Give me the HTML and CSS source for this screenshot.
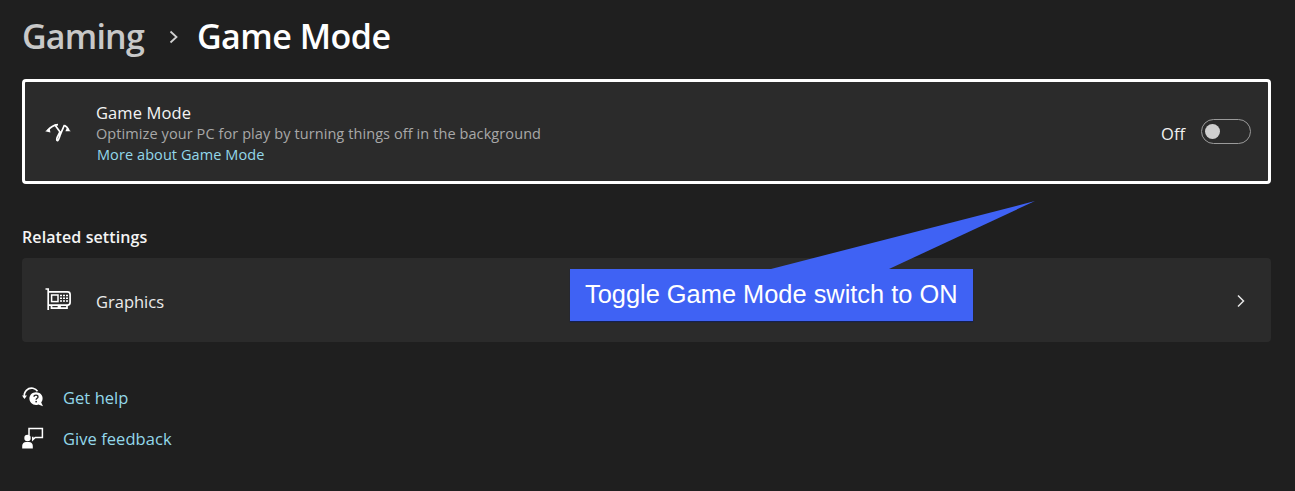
FILE: index.html
```html
<!DOCTYPE html>
<html lang="en">
<head>
<meta charset="utf-8">
<title>Game Mode</title>
<link rel="stylesheet" href="styles.css">
</head>
<body>
<main class="page">
  <header class="crumbs">
    <span class="crumb-parent">Gaming</span>
    <svg class="crumb-sep" viewBox="0 0 12 16"><path d="M2.5 2.5 8.5 8 2.5 13.5" fill="none" stroke="#d0d0d0" stroke-width="1.8"/></svg>
    <span class="crumb-current">Game Mode</span>
  </header>

  <section class="card card-focus">
    <svg class="row-icon" viewBox="0 0 26 22" fill="none" stroke="#fff" stroke-width="1.7">
      <path d="M2.5 9.6C5 6.4 8.5 4 13 3.6M19.4 4.4C21.2 5.2 22.8 7 23.8 9" />
      <path d="M0.2 10.3 4.6 7.2 5.4 11.6Z" fill="#fff" stroke="none"/>
      <path d="M25.8 10.3 21.8 7 20.4 10.2Z" fill="#fff" stroke="none"/>
      <path d="M9.8 3.8 15.2 11.2"/>
      <path d="M19.4 4 15 14.4C14.2 16.8 13.6 19.2 12.7 19.6 11.5 20 11.5 18 12.3 16.2L15.2 10.4"/>
    </svg>
    <div class="row-text">
      <div class="row-title">Game Mode</div>
      <div class="row-sub">Optimize your PC for play by turning things off in the background</div>
      <a class="row-link">More about Game Mode</a>
    </div>
    <span class="toggle-label">Off</span>
    <span class="toggle"><span class="knob"></span></span>
  </section>

  <h2 class="section-title">Related settings</h2>

  <section class="card card-plain">
    <svg class="row-icon" viewBox="0 0 26 24" fill="none" stroke="#fff" stroke-width="1.7">
      <path d="M0.5 2H3.2V23"/>
      <path d="M3.2 4.8H22.5C24.2 4.8 25.1 5.7 25.1 7.4V15.6C25.1 17.2 24.2 18.1 22.5 18.1H3.2"/>
      <path d="M6.5 18.1V21.2H13.5V18.1M15 18.1V21.2H22V18.1"/>
      <rect x="6.6" y="8" width="6.4" height="6.6" stroke-width="1.5"/>
      <path d="M15 8.6H23M15 11.3H23M15 14H23" stroke-dasharray="2 1" stroke-width="1.5"/>
    </svg>
    <div class="row-name">Graphics</div>
    <svg class="row-chevron" viewBox="0 0 12 16"><path d="M3 2.5 8.5 8 3 13.5" fill="none" stroke="#e6e6e6" stroke-width="1.5"/></svg>
  </section>

  <nav class="help">
    <a class="help-row">
      <svg class="help-icon" viewBox="0 0 22 22">
        <path d="M2.5 11.5C1.2 5.8 6 1.3 11 2.3 13 2.7 14.6 3.8 15.5 5.2" fill="none" stroke="#fff" stroke-width="1.6"/>
        <path d="M0 9.5 5 9.5 2.5 13Z" fill="#fff"/>
        <path d="M14 6.2C18 6.2 20.6 9 20.6 12.2 20.6 14 20 15.4 19.2 16.4L21 20.2 16.4 18.4C15.4 18.8 14.7 19 14 19 10.2 19 7.4 16 7.4 12.6 7.4 9 10.2 6.2 14 6.2Z" fill="#fff"/>
        <path d="M12 10.8C12 9.6 13 9.2 14 9.2 15.2 9.2 16 9.9 16 10.9 16 12.3 14.1 12.4 14.1 13.8" fill="none" stroke="#202020" stroke-width="1.3"/>
        <rect x="13.4" y="14.9" width="1.5" height="1.5" fill="#202020"/>
      </svg>
      <span>Get help</span>
    </a>
    <a class="help-row">
      <svg class="help-icon" viewBox="0 0 22 22">
        <circle cx="5.5" cy="11" r="3.2" fill="#fff"/>
        <path d="M0.2 21.5V18.8C0.2 16.4 2 15 4 15H7C9 15 10.8 16.4 10.8 18.8V21.5Z" fill="#fff"/>
        <path d="M7 8.5V1.5H20.4V10.5H13.2L10.8 12.7V10.5H10" fill="none" stroke="#fff" stroke-width="1.5"/>
      </svg>
      <span>Give feedback</span>
    </a>
  </nav>
</main>

<aside class="callout">
  <svg class="callout-tail" viewBox="0 0 270 70"><path d="M0 68 264 0 118 68Z" fill="#3f62f4"/></svg>
  <div class="callout-box">Toggle Game Mode switch to ON</div>
</aside>
</body>
</html>
```

FILE: styles.css
```css
* { box-sizing: border-box; }
html, body { margin: 0; padding: 0; }
body {
  width: 1295px;
  height: 491px;
  overflow: hidden;
  background: #1f1f1f;
  color: #fff;
  font-family: "Open Sans", "Noto Sans", "Liberation Sans", sans-serif;
  position: relative;
}
.page { padding: 14px 24px 0 22px; }
.crumbs {
  display: flex;
  align-items: center;
  height: 44px;
  font-size: 34px;
  font-weight: 600;
  letter-spacing: -0.5px;
}
.crumb-parent { color: #c8c8c8; letter-spacing: -0.8px; }
.crumb-sep { width: 12px; height: 16px; margin: 2px 17px 0 24px; }
.crumb-current { color: #fff; }
.card {
  display: flex;
  align-items: center;
  background: #2b2b2b;
  border-radius: 4px;
}
.card-focus {
  height: 105px;
  margin-top: 21px;
  border: 3px solid #fff;
  padding: 0 17px 0 20px;
}
.card-plain {
  height: 84px;
  padding: 0 24px 0 23px;
}
.row-icon { width: 26px; height: 22px; flex: none; }
.card-plain .row-icon { height: 24px; margin-top: -2px; }
.row-text { margin-left: 25px; flex: 1; margin-top: 2px; }
.row-title { font-size: 16.5px; line-height: 22px; letter-spacing: 0.1px; color: #f4f4f4; }
.row-sub { font-size: 14.5px; line-height: 19px; letter-spacing: 0.09px; color: #a8a8a8; }
.row-link {
  display: block;
  margin: 2px 0 0 1px;
  font-size: 14.5px;
  line-height: 19px;
  letter-spacing: 0.08px;
  color: #93d8ea;
}
.toggle-label { font-size: 16.5px; color: #f2f2f2; margin: 3px 16px 0 0; }
.toggle {
  width: 50px;
  height: 25px;
  border: 1px solid #9a9a9a;
  border-radius: 13px;
  display: flex;
  align-items: center;
  padding-left: 3px;
}
.knob { width: 15px; height: 15px; border-radius: 50%; background: #cfcfcf; }
.section-title {
  margin: 42px 0 0;
  height: 32px;
  font-size: 16px;
  line-height: 22px;
  font-weight: 600;
  letter-spacing: 0.1px;
  color: #f4f4f4;
}
.row-name { flex: 1; margin-left: 25px; font-size: 16.5px; color: #ececec; margin-top: 3px; }
.row-chevron { width: 12px; height: 16px; flex: none; margin-top: 1px; }
.help { display: flex; flex-direction: column; gap: 18px; margin-top: 44px; }
.help-row {
  display: flex;
  align-items: center;
  height: 23px;
  font-size: 16.5px;
  letter-spacing: 0.05px;
  color: #93d8ea;
}
.help-icon { width: 22px; height: 22px; flex: none; margin-right: 19px; margin-top: -2px; }
.callout { position: absolute; left: 570px; top: 201px; width: 466px; height: 119px; }
.callout-tail { position: absolute; left: 201px; top: 0; width: 270px; height: 70px; }
.callout-box {
  position: absolute;
  left: 0;
  top: 68px;
  width: 403px;
  height: 52px;
  background: #3f62f4;
  box-shadow: 0 1px 1px #14204f;
  color: #fff;
  font-family: "Liberation Sans", Arial, sans-serif;
  font-size: 25.4px;
  line-height: 50px;
  padding-left: 15px;
  white-space: nowrap;
}
```
